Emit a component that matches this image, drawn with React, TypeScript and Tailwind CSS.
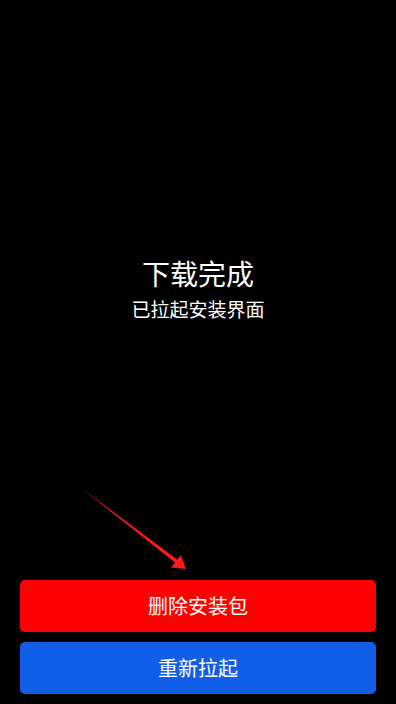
import React from "react";

const font = { fontFamily: '"Noto Sans CJK SC", "Noto Sans", sans-serif' };

export default function App() {
  return (
    <div
      className="relative flex h-[704px] w-full flex-col bg-black text-white"
      style={font}
    >
      {/* Status message */}
      <div className="flex flex-1 flex-col items-center justify-center gap-[7px] pb-1">
        <div className="text-[28px] leading-[34px]">下载完成</div>
        <div className="text-[19px] leading-[24px]">已拉起安装界面</div>
      </div>

      {/* Annotation arrow */}
      <svg
        className="pointer-events-none absolute left-0 top-0"
        width="396"
        height="704"
        viewBox="0 0 396 704"
      >
        <polygon
          points="82,488.5 177.2,559.4 181,555.5 186,569 171,567.5 175,562.6"
          fill="#ff1a1a"
        />
      </svg>

      {/* Actions */}
      <div className="flex flex-col gap-[10px] px-5 pb-[10px]">
        <button className="h-[52px] rounded-[5px] bg-[#ff0000] text-[20px] text-white">
          删除安装包
        </button>
        <button className="h-[52px] rounded-[5px] bg-[#105ee8] text-[20px] text-white">
          重新拉起
        </button>
      </div>
    </div>
  );
}
